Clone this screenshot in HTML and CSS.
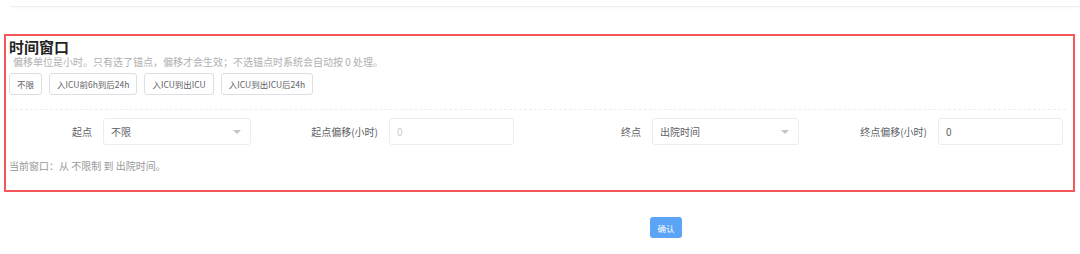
FILE: index.html
```html
<!DOCTYPE html>
<html lang="zh-CN">
<head>
  <meta charset="UTF-8">
  <meta name="viewport" content="width=device-width, initial-scale=1.0">
  <title>时间窗口</title>
  <link rel="stylesheet" href="styles.css">
</head>
<body>
  <div class="top-card"></div>

  <div class="window-box">
    <div class="title">时间窗口</div>
    <div class="hint">偏移单位是小时。只有选了锚点，偏移才会生效；不选锚点时系统会自动按 0 处理。</div>
    <div class="presets">
      <button class="preset">不限</button>
      <button class="preset">入ICU前6h到后24h</button>
      <button class="preset">入ICU到出ICU</button>
      <button class="preset">入ICU到出ICU后24h</button>
    </div>
    <div class="divider"></div>
    <div class="form-row">
      <label class="label">起点</label>
      <div class="select"><span>不限</span><i class="arrow"></i></div>
      <label class="label">起点偏移(小时)</label>
      <div class="input placeholder">0</div>
      <label class="label">终点</label>
      <div class="select"><span>出院时间</span><i class="arrow"></i></div>
      <label class="label">终点偏移(小时)</label>
      <div class="input">0</div>
    </div>
    <div class="summary">当前窗口：从 不限制 到 出院时间。</div>
  </div>

  <div class="footer">
    <button class="confirm">确认</button>
  </div>
</body>
</html>
```

FILE: styles.css
```css
body {
  margin: 0;
  padding: 0;
  width: 1080px;
  height: 254px;
  overflow: hidden;
  background: #fff;
  font-family: "Noto Sans CJK SC", "Noto Sans", sans-serif;
  color: #606266;
}
.top-card {
  margin-left: 10px;
  height: 6px;
  border-bottom: 1px solid #f0f0f0;
  box-shadow: 0 1px 3px rgba(0, 0, 0, 0.03);
}
.window-box {
  box-sizing: border-box;
  margin: 27px 5px 0 4px;
  height: 158px;
  border: 2px solid #f4565a;
  padding: 3px 3px 0 3px;
}
.title {
  font-size: 15px;
  font-weight: bold;
  line-height: 16px;
  color: #222;
}
.hint {
  margin-left: 4px;
  font-size: 10px;
  line-height: 13px;
  color: #b0b0b0;
}
.presets {
  display: flex;
  gap: 7px;
  margin-top: 5px;
}
.preset {
  height: 22px;
  padding: 0 7px;
  border: 1px solid #dcdfe6;
  border-radius: 3px;
  background: #fff;
  color: #606266;
  font-family: inherit;
  font-size: 8.5px;
  line-height: 20px;
}
.divider {
  margin: 14px 4px 0 1px;
  border-top: 1px dashed #eceef2;
}
.form-row {
  display: grid;
  grid-template-columns: 83px 148px 138px 125px 138px 147px 139px 125px;
  align-items: center;
  margin-top: 8px;
  padding-left: 11px;
}
.label {
  padding-right: 11px;
  text-align: right;
  font-size: 10px;
  color: #606266;
}
.select, .input {
  box-sizing: border-box;
  height: 27px;
  border: 1px solid #eaecf0;
  border-radius: 3px;
  padding: 0 7px;
  display: flex;
  align-items: center;
  font-size: 10px;
  color: #606266;
}
.select {
  justify-content: space-between;
}
.input.placeholder {
  color: #c8cbd2;
}
.arrow {
  width: 0;
  height: 0;
  margin-right: 2px;
  border-left: 4px solid transparent;
  border-right: 4px solid transparent;
  border-top: 4px solid #c0c4cc;
}
.summary {
  margin-top: 15px;
  font-size: 10px;
  line-height: 12px;
  color: #999;
}
.footer {
  padding: 25px 0 0 650px;
}
.confirm {
  display: block;
  width: 32px;
  height: 21px;
  padding: 0;
  border: none;
  border-radius: 3px;
  background: #5ba4f6;
  color: #fff;
  font-family: inherit;
  font-size: 8.5px;
}
```
